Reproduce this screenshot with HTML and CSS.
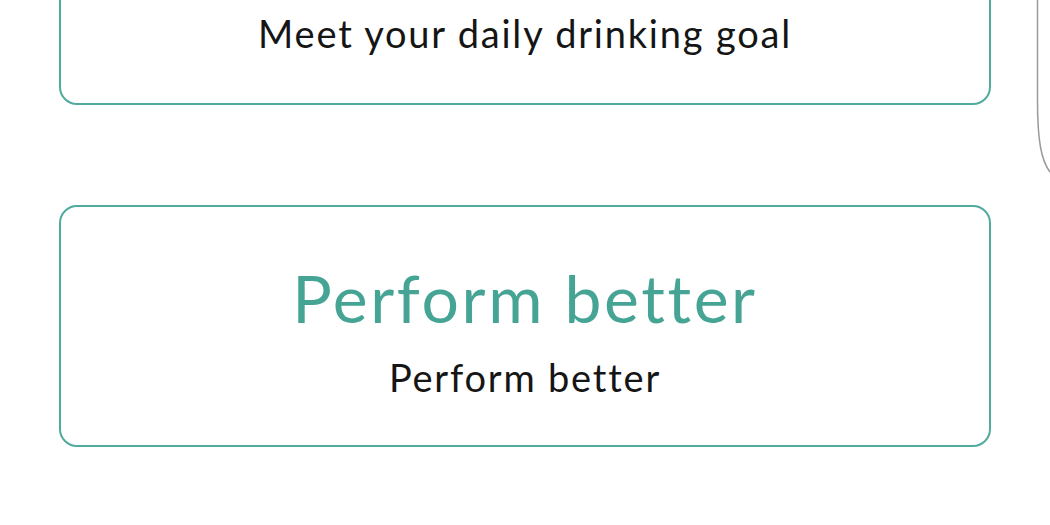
FILE: index.html
```html
<!DOCTYPE html>
<html lang="en">
<head>
<meta charset="utf-8">
<title>Goals</title>
<link rel="stylesheet" href="styles.css">
</head>
<body>
<div class="page">
  <div class="list">
    <div class="card card-top">
      <p class="subtitle">Meet your daily drinking goal</p>
    </div>
    <div class="card card-main">
      <h2 class="title">Perform better</h2>
      <p class="subtitle">Perform better</p>
    </div>
  </div>
  <svg class="side-frame" width="14" height="180" viewBox="0 0 14 180" aria-hidden="true">
    <path d="M1.5 0 L1.5 100 C1.5 140 5 160 14 172" fill="none" stroke="#9a9a9a" stroke-width="1.5"/>
  </svg>
</div>
</body>
</html>
```

FILE: styles.css
```css
html, body {
  margin: 0;
  padding: 0;
  background: #ffffff;
}

body {
  width: 1050px;
  height: 525px;
  overflow: hidden;
  font-family: Lato, "Open Sans", "Liberation Sans", sans-serif;
  color: #151515;
}

.page {
  position: relative;
  width: 1050px;
  height: 525px;
  overflow: hidden;
}

.list {
  display: flex;
  flex-direction: column;
  gap: 100px;
  padding: 0 59px;
  width: 932px;
  margin-top: -95px;
}

.card {
  box-sizing: border-box;
  border: 2px solid #4fab9e;
  border-radius: 18px;
  display: flex;
  flex-direction: column;
  align-items: center;
}

.card-top {
  height: 200px;
  justify-content: flex-end;
  padding-bottom: 48px;
}

.card-main {
  height: 242px;
  justify-content: center;
  padding-top: 4px;
}

.title {
  margin: 0 0 17px;
  font-weight: 400;
  font-size: 66px;
  line-height: 80px;
  color: #45a494;
  letter-spacing: 2.6px;
}

.subtitle {
  margin: 0;
  font-weight: 400;
  font-size: 38px;
  line-height: 44px;
  color: #151515;
  letter-spacing: 1.8px;
}

.side-frame {
  position: absolute;
  left: 1036px;
  top: 0;
  display: block;
}
```
